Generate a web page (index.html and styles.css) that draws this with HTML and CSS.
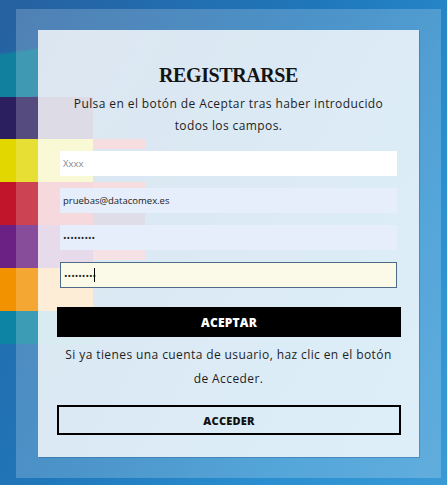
FILE: index.html
```html
<!DOCTYPE html>
<html lang="es">
<head>
<meta charset="utf-8">
<title>Registrarse</title>
<link rel="stylesheet" href="styles.css">
</head>
<body>
<div class="frame">
  <form class="panel">
    <h1 class="title">REGISTRARSE</h1>
    <p class="intro">Pulsa en el botón de Aceptar tras haber introducido todos los campos.</p>
    <input class="field field--blank" type="text" placeholder="Xxxx">
    <input class="field field--filled" type="email" value="pruebas@datacomex.es">
    <input class="field field--filled" type="password" value="123456789">
    <div class="field-wrap">
      <input class="field field--focus" type="password" value="123456789">
    </div>
    <button class="btn btn--primary" type="button">ACEPTAR</button>
    <p class="note">Si ya tienes una cuenta de usuario, haz clic en el botón de Acceder.</p>
    <button class="btn btn--outline" type="button">ACCEDER</button>
  </form>
</div>
</body>
</html>
```
FILE: styles.css
```css
html, body {
  margin: 0;
  padding: 0;
}
body {
  width: 447px;
  height: 485px;
  overflow: hidden;
  font-family: "Open Sans", "Noto Sans", sans-serif;
  color: #1e1e1e;
  background:
    linear-gradient(to bottom,
      transparent 0, transparent 139px,
      #c82a3a 139px, #c82a3a 149px,
      transparent 149px, transparent 182px,
      #c82a3a 182px, #c82a3a 213px,
      #3a2f6a 213px, #3a2f6a 225px,
      transparent 225px, transparent 250px,
      #c84a5a 250px, #c84a5a 260px,
      transparent 260px) 93px 0 / 52px 100% no-repeat,
    linear-gradient(to bottom,
      transparent 0, transparent 97px,
      #2b1f60 97px, #2b1f60 139px,
      #e2d800 139px, #e2d800 182px,
      #c0152a 182px, #c0152a 225px,
      #6a2183 225px, #6a2183 268px,
      #f39200 268px, #f39200 311px,
      #0d84a3 311px, #0d84a3 344px,
      transparent 344px) 0 0 / 93px 100% no-repeat,
    linear-gradient(172deg, transparent 0, transparent 52px, #11809f 55px, #11809f 100px, transparent 100px) 0 0 / 38px 100% no-repeat,
    linear-gradient(120deg, #2660a0 0%, #1f78bb 45%, #2a8fd0 75%, #3a9ad6 100%);
}
.frame {
  box-sizing: border-box;
  width: 425px;
  height: 469px;
  margin: 9px 0 0 16px;
  padding: 21px 22px;
  background: rgba(255, 255, 255, 0.2);
}
.panel {
  box-sizing: border-box;
  width: 381px;
  height: 427px;
  padding: 33px 0 0 0;
  display: flex;
  flex-direction: column;
  background: rgba(255, 255, 255, 0.8);
  box-shadow: 1px 1px 0 rgba(40, 90, 140, 0.35);
}
.title {
  margin: 0;
  font-family: "Liberation Serif", "Times New Roman", serif;
  font-weight: bold;
  font-size: 20px;
  letter-spacing: -0.4px;
  line-height: 24px;
  text-align: center;
  color: #141414;
}
.intro {
  margin: 6px 24px 0;
  font-size: 12px;
  letter-spacing: 0.4px;
  line-height: 22px;
  text-align: center;
  color: #1e1e1e;
}
.field {
  box-sizing: border-box;
  display: block;
  width: 337px;
  height: 25px;
  margin: 12px 0 0 22px;
  padding: 0 3px;
  border: none;
  outline: none;
  font-family: "Open Sans", "Noto Sans", sans-serif;
  font-size: 9.5px;
  color: #222;
}
.field--blank {
  margin-top: 14px;
  background: #ffffff;
}
.field--blank::placeholder {
  color: #8a8a8a;
}
.field--filled {
  background: #e6eefb;
}
.field-wrap {
  position: relative;
  margin-top: 12px;
}
.field-wrap .field {
  margin-top: 0;
  height: 26px;
}
.field--focus {
  background: #fbf9e8;
  border: 1px solid #4d6a86;
}
.field-wrap::after {
  content: "";
  position: absolute;
  left: 56px;
  top: 6px;
  width: 1px;
  height: 14px;
  background: #000;
}
.btn {
  box-sizing: border-box;
  display: block;
  width: 344px;
  height: 30px;
  margin: 19px 0 0 19px;
  font-family: "Open Sans", "Noto Sans", sans-serif;
  font-weight: 800;
  font-size: 12px;
  letter-spacing: 0.2px;
  cursor: pointer;
}
.btn--primary {
  background: #000;
  color: #fff;
  border: none;
}
.btn--outline {
  margin-top: 14px;
  background: transparent;
  color: #111;
  border: 2px solid #000;
  font-size: 11px;
}
.note {
  margin: 6px 20px 0;
  font-size: 12px;
  letter-spacing: 0.4px;
  line-height: 24px;
  text-align: center;
  color: #1e1e1e;
}
```
